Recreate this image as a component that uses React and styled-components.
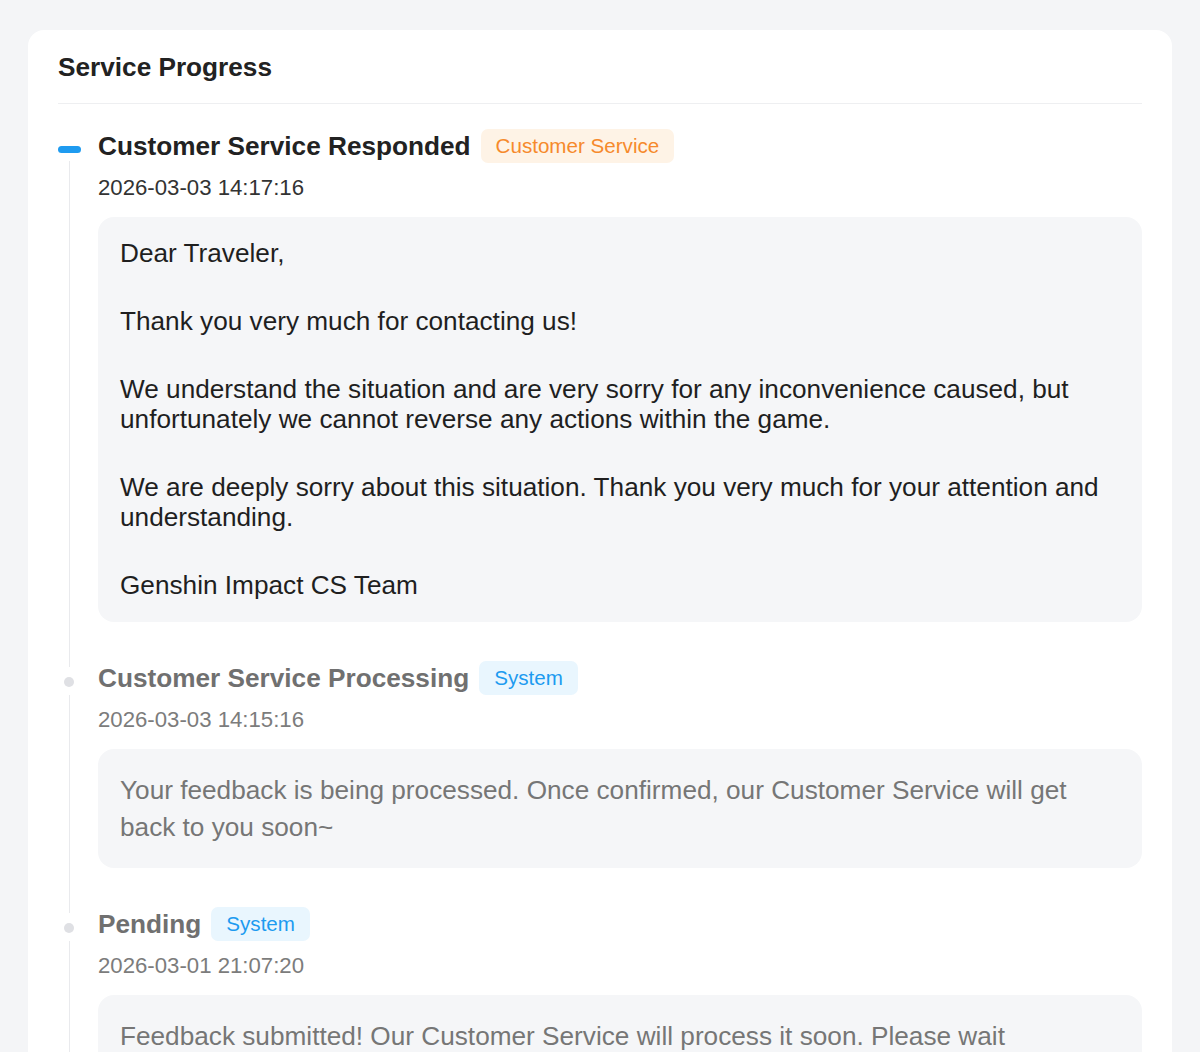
import styled, { createGlobalStyle } from "styled-components";

const GlobalStyle = createGlobalStyle`
  html, body {
    margin: 0;
    padding: 0;
    background: #f4f5f7;
  }
  body {
    font-family: "Liberation Sans", Arial, Helvetica, sans-serif;
    -webkit-font-smoothing: antialiased;
  }
  * {
    box-sizing: border-box;
  }
`;

const steps = [
  {
    title: "Customer Service Responded",
    tag: "Customer Service",
    tone: "orange",
    active: true,
    time: "2026-03-03 14:17:16",
    paragraphs: [
      "Dear Traveler,",
      "Thank you very much for contacting us!",
      "We understand the situation and are very sorry for any inconvenience caused, but unfortunately we cannot reverse any actions within the game.",
      "We are deeply sorry about this situation. Thank you very much for your attention and understanding.",
      "Genshin Impact CS Team",
    ],
  },
  {
    title: "Customer Service Processing",
    tag: "System",
    tone: "blue",
    time: "2026-03-03 14:15:16",
    text: "Your feedback is being processed. Once confirmed, our Customer Service will get back to you soon~",
  },
  {
    title: "Pending",
    tag: "System",
    tone: "blue",
    time: "2026-03-01 21:07:20",
    text: "Feedback submitted! Our Customer Service will process it soon. Please wait patiently~",
  },
];

const App = () => {
  return (
    <Page>
      <GlobalStyle />
      <Card>
        <Header>Service Progress</Header>
        <Timeline>
          {steps.map((step, i) => (
            <Item key={i}>
              <Rail>
                {step.active ? <Dash /> : <Dot />}
                <Tail />
              </Rail>
              <Body>
                <TitleRow>
                  <Title active={step.active}>{step.title}</Title>
                  <Tag tone={step.tone}>{step.tag}</Tag>
                </TitleRow>
                <Time active={step.active}>{step.time}</Time>
                {step.paragraphs ? (
                  <Reply>
                    {step.paragraphs.map((p, j) => (
                      <p key={j}>{p}</p>
                    ))}
                  </Reply>
                ) : (
                  <Note>{step.text}</Note>
                )}
              </Body>
            </Item>
          ))}
        </Timeline>
      </Card>
    </Page>
  );
};

const Page = styled.div`
  padding: 30px 28px 0;
  min-height: 100vh;
`;

const Card = styled.div`
  background: #fff;
  border-radius: 16px;
  padding: 0 30px;
`;

const Header = styled.div`
  padding: 22px 0 21px;
  font-size: 26.2px;
  line-height: 30px;
  font-weight: 700;
  color: #222;
  border-bottom: 1px solid #eeeff1;
`;

const Timeline = styled.div`
  padding-top: 25px;
`;

const Item = styled.div`
  display: grid;
  grid-template-columns: 40px 1fr;
`;

const Rail = styled.div`
  display: flex;
  flex-direction: column;
  margin-bottom: -6px;
`;

const Dash = styled.div`
  width: 23px;
  height: 7px;
  margin-top: 17px;
  border-radius: 4px;
  background: #1e9bf0;
`;

const Dot = styled.div`
  width: 10px;
  height: 10px;
  margin: 16px 0 0 6px;
  border-radius: 50%;
  background: #dfe0e4;
`;

const Tail = styled.div`
  flex: 1;
  width: 1.5px;
  margin: 8px 0 0 10.5px;
  background: #e9eaed;
`;

const Body = styled.div`
  padding-bottom: 39px;
  min-width: 0;
`;

const TitleRow = styled.div`
  display: flex;
  align-items: center;
  gap: 10px;
  height: 34px;
`;

const Title = styled.div`
  font-size: 26.2px;
  font-weight: 700;
  color: ${(p) => (p.active ? "#222" : "#707070")};
  white-space: nowrap;
`;

const Tag = styled.span`
  display: inline-flex;
  align-items: center;
  height: 34px;
  padding: 0 15px;
  border-radius: 7px;
  font-size: 20.6px;
  color: ${(p) => (p.tone === "orange" ? "#f68a2c" : "#1d9bf0")};
  background: ${(p) => (p.tone === "orange" ? "#fef3e6" : "#e9f6fe")};
`;

const Time = styled.div`
  margin-top: 12px;
  font-size: 22.2px;
  line-height: 26px;
  color: ${(p) => (p.active ? "#333" : "#7c7c7c")};
`;

const Box = styled.div`
  margin-top: 16px;
  background: #f5f6f8;
  border-radius: 16px;
  font-size: 26.2px;
`;

const Reply = styled(Box)`
  padding: 21px 22px 22px;
  color: #1f1f1f;
  line-height: 30px;

  p {
    margin: 0 0 38px;
  }
  p:last-child {
    margin-bottom: 0;
  }
`;

const Note = styled(Box)`
  padding: 23px 40px 22px 22px;
  color: #767676;
  line-height: 37px;
`;

export default App;
